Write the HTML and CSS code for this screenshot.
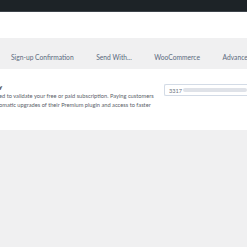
FILE: index.html
```html
<!DOCTYPE html>
<html>
<head>
<meta charset="utf-8">
<link rel="stylesheet" href="styles.css">
</head>
<body>
<div class="topbar"></div>
<div class="header"></div>
<nav class="tabs">
  <span class="tab">Sign-up Confirmation</span>
  <span class="tab">Send With...</span>
  <span class="tab">WooCommerce</span>
  <span class="tab">Advanced</span>
</nav>
<section class="panel">
  <div class="label">
    <div class="title">y</div>
    <p class="desc">ed to validate your free or paid subscription. Paying customers<br>omatic upgrades of their Premium plugin and access to faster</p>
  </div>
  <div class="field">
    <span class="key">3317</span><span class="blur"></span>
  </div>
</section>
</body>
</html>
```
FILE: styles.css
```css
html, body {
  margin: 0;
  padding: 0;
  background: #f0f0f1;
  font-family: Lato, "Open Sans", sans-serif;
  overflow: hidden;
  width: 247px;
  height: 247px;
}
.topbar {
  height: 11px;
  background: #1d2327;
  border-bottom: 1px solid #3d444b;
}
.header {
  height: 26px;
  background: #fff;
}
.tabs {
  height: 31px;
  background: #f0f0f1;
  display: flex;
  align-items: flex-end;
  padding: 0 0 8px 11px;
  box-sizing: border-box;
  gap: 22.5px;
  white-space: nowrap;
  overflow: hidden;
}
.tab {
  font-size: 6.7px;
  color: #5b6a7e;
  line-height: 8px;
}
.panel {
  height: 61px;
  background: #fff;
  display: flex;
  box-sizing: border-box;
  padding-top: 14px;
  overflow: hidden;
}
.label {
  width: 164px;
  flex-shrink: 0;
}
.title {
  font-size: 6px;
  font-weight: 700;
  color: #1d2327;
  line-height: 7px;
  margin-left: -1px;
}
.desc {
  margin: 1px 0 0;
  font-size: 5.7px;
  line-height: 9px;
  color: #5a6169;
  white-space: nowrap;
  margin-left: -1px;
}
.field {
  margin-top: 1px;
  height: 12px;
  flex: 1;
  border: 1px solid #d3dbe6;
  border-right: none;
  border-radius: 2px 0 0 2px;
  box-sizing: border-box;
  display: flex;
  align-items: center;
  padding-left: 4px;
  gap: 1px;
}
.key {
  font-size: 5.6px;
  color: #6b7480;
}
.blur {
  flex: 1;
  height: 4px;
  background: #dfe2e8;
  border-radius: 2px;
}
```
